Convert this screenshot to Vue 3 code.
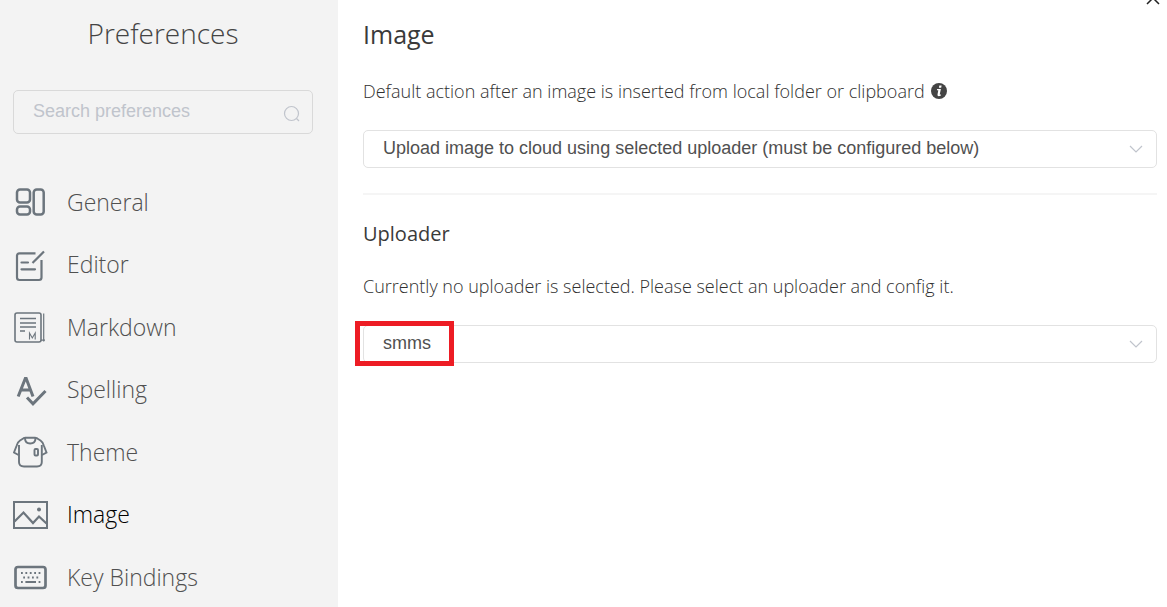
<script setup>
import { ref } from 'vue'

const categories = ['General', 'Editor', 'Markdown', 'Spelling', 'Theme', 'Image', 'Key Bindings']
const current = ref('Image')
const query = ref('')
const action = ref('upload')
const uploader = ref('smms')
</script>

<template>
  <div class="preferences">
    <aside class="sidebar">
      <h3 class="title">Preferences</h3>
      <div class="search">
        <input v-model="query" type="text" placeholder="Search preferences" aria-label="Search preferences" />
        <svg class="search-icon" viewBox="0 0 18 18" aria-hidden="true">
          <circle cx="8.5" cy="8.5" r="7" />
          <path d="M13.5 13.5 L16 16" />
        </svg>
      </div>
      <nav class="categories">
        <a
          v-for="name in categories"
          :key="name"
          href="#"
          class="category"
          :class="{ active: name === current }"
          @click.prevent="current = name"
        >
          <svg class="icon" viewBox="0 0 36 36" aria-hidden="true">
            <g v-if="name === 'General'" stroke-width="2.5">
              <rect x="4" y="5.5" width="13" height="13" rx="3" />
              <rect x="4" y="22.5" width="13" height="8" rx="3" />
              <rect x="20.7" y="5.5" width="10" height="25" rx="3" />
            </g>
            <g v-else-if="name === 'Editor'" stroke-width="2.2">
              <path d="M22.5 6.3 H6.5 Q4 6.3 4 8.8 V30.5 Q4 33 6.5 33 H26 Q28.5 33 28.5 30.5 V13" />
              <path d="M31 4.5 L19.5 16" />
              <path d="M8.5 15.5 H15 M8.5 22.3 H22" stroke-linecap="round" />
            </g>
            <g v-else-if="name === 'Markdown'">
              <rect x="2" y="4" width="26" height="29" rx="2" stroke-width="1.6" />
              <path d="M30.7 4.5 V32.5 M28 31.2 H32" stroke-width="1.2" />
              <path d="M7 9.5 H23 M7 14 H23 M7 18 H23 M7 22 H12" stroke-width="1.5" />
              <path d="M16.5 30.5 V24 L19.3 29 L22.2 24 V30.5" stroke-width="1.1" />
            </g>
            <g v-else-if="name === 'Spelling'" stroke-width="3">
              <path d="M5.2 24.5 L12.3 6.5 H13.2 L20 24.5 M7.5 18 H17.5" />
              <path d="M14 25.5 L20 31.8 L32.5 19" />
            </g>
            <g v-else-if="name === 'Theme'" stroke-width="1.9">
              <path d="M11 4 L7 6.5 Q4.5 8 3.5 12 L1 18.5 L5.5 21 M23.5 4 L27.5 6.5 Q30 8 31 12 L33.5 18.5 L29 21" />
              <path d="M6 11 V28 Q6 32.5 11 32.5 H24 Q28.8 32.5 28.8 28 V11" />
              <path d="M10.5 4.3 Q11.5 3.8 12.5 3.8 H22 Q23 3.8 24 4.3 M12 4 Q12 9.5 17.2 9.5 Q22.5 9.5 22.5 4" />
              <rect x="21.5" y="15" width="3.5" height="6.5" rx="1" />
            </g>
            <g v-else-if="name === 'Image'" stroke-width="2">
              <rect x="1" y="5" width="33" height="26" />
              <path d="M1.5 24.5 L10.5 15.5 L20 26 L26 19.5 L33.5 26.5" stroke-width="2.2" />
              <circle class="dot" cx="26" cy="12.5" r="2" />
            </g>
            <g v-else>
              <rect x="2.5" y="8" width="30" height="21" rx="2.5" stroke-width="2.7" />
              <path
                d="M8 14 H9.8 M12.4 14 H14.2 M16.8 14 H18.6 M21.2 14 H23 M25.6 14 H27.4 M10.2 18.5 H12 M14.6 18.5 H16.4 M19 18.5 H20.8 M23.4 18.5 H25.2 M8 23 H9.8 M12.4 23 H23 M25.6 23 H27.4"
                stroke-width="2.2"
              />
            </g>
          </svg>
          <span>{{ name }}</span>
        </a>
      </nav>
    </aside>

    <main class="content">
      <button class="close" type="button" aria-label="Close">
        <svg viewBox="0 0 14 14" aria-hidden="true"><path d="M1 1 L13 13 M13 1 L1 13" /></svg>
      </button>

      <h4 class="heading">Image</h4>
      <label class="description" for="image-action">
        <span>Default action after an image is inserted from local folder or clipboard</span>
        <svg class="info" viewBox="0 0 16 16" aria-hidden="true">
          <circle cx="8" cy="8" r="8" />
          <path d="M8.3 2.5 H10.6 L10.2 4.7 H7.9 Z M6.1 6.1 H9.9 L8.7 11.5 H9.9 L9.7 12.7 Q6.1 14 6.5 11.5 L7.3 7.3 H5.9 Z" />
        </svg>
      </label>
      <div class="select">
        <select id="image-action" v-model="action">
          <option value="upload">Upload image to cloud using selected uploader (must be configured below)</option>
        </select>
        <svg class="chevron" viewBox="0 0 14 8" aria-hidden="true"><path d="M1 1 L7 7 L13 1" /></svg>
      </div>

      <hr class="separator" />

      <h5 class="subheading">Uploader</h5>
      <label class="description" for="uploader">Currently no uploader is selected. Please select an uploader and config it.</label>
      <div class="select">
        <select id="uploader" v-model="uploader">
          <option value="smms">smms</option>
        </select>
        <svg class="chevron" viewBox="0 0 14 8" aria-hidden="true"><path d="M1 1 L7 7 L13 1" /></svg>
        <span class="highlight"></span>
      </div>
    </main>
  </div>
</template>

<style>
body {
  margin: 0;
  background: #fff;
}
</style>

<style scoped>
.preferences {
  display: flex;
  min-height: 100vh;
  font-family: "Open Sans", "Noto Sans", sans-serif;
  font-weight: 300;
  color: #303030;
}

.preferences * {
  box-sizing: border-box;
}

.sidebar {
  flex: 0 0 338px;
  display: flex;
  flex-direction: column;
  background: #f3f3f3;
}

.title {
  margin: 15px 25px 39px 13px;
  font-size: 28px;
  line-height: 36px;
  font-weight: 300;
  text-align: center;
  color: #444;
}

.search {
  position: relative;
  margin: 0 25px 38px 13px;
}

.search input {
  display: block;
  width: 100%;
  height: 44px;
  padding: 0 40px 2px 19px;
  border: 1px solid #d9d9d9;
  border-radius: 5px;
  outline: none;
  background: transparent;
  font: 18px "Liberation Sans", Arial, sans-serif;
  color: #555;
}

.search input::placeholder {
  color: #c0c4cc;
  opacity: 1;
}

.search-icon {
  position: absolute;
  top: 15px;
  right: 12px;
  width: 18px;
  height: 18px;
  fill: none;
  stroke: #c0c4cc;
  stroke-width: 1.2;
}

.categories {
  flex: 1;
  display: flex;
  flex-direction: column;
  justify-content: space-between;
}

.category {
  display: flex;
  align-items: center;
  gap: 18px;
  height: 60px;
  padding-left: 13px;
  font-size: 23px;
  line-height: 33px;
  color: #505050;
  text-decoration: none;
}

.category.active {
  color: #000;
}

.icon {
  width: 36px;
  height: 36px;
  fill: none;
  stroke: #6c757d;
}

.dot {
  fill: #6c757d;
  stroke: none;
}

.content {
  position: relative;
  flex: 1;
  min-width: 0;
  padding: 17px 10px 20px 25px;
  overflow: hidden;
}

.close {
  position: absolute;
  top: -9px;
  right: 7px;
  width: 14px;
  height: 14px;
  padding: 0;
  border: 0;
  background: none;
}

.close svg {
  display: block;
  fill: none;
  stroke: #222;
  stroke-width: 1.5;
}

.heading {
  margin: 0 0 27px;
  font-size: 25px;
  line-height: 34px;
  font-weight: 400;
  color: #3a3a3a;
}

.description {
  display: flex;
  align-items: center;
  gap: 6px;
  margin-bottom: 26px;
  font-size: 18px;
  line-height: 26px;
}

.info {
  width: 16px;
  height: 16px;
  fill: #444;
}

.info path {
  fill: #fff;
}

.select {
  position: relative;
}

.select select {
  display: block;
  width: 100%;
  height: 38px;
  padding: 0 40px 3px 19px;
  border: 1px solid #e2e2e2;
  border-radius: 5px;
  outline: none;
  appearance: none;
  background: #fff;
  font: 18px "Liberation Sans", Arial, sans-serif;
  color: #505050;
}

.chevron {
  position: absolute;
  top: 15px;
  right: 14px;
  width: 14px;
  height: 8px;
  fill: none;
  stroke: #c0c4cc;
  stroke-width: 1.2;
  pointer-events: none;
}

.separator {
  height: 2px;
  margin: 25px 0 26px;
  border: 0;
  background: #f5f5f5;
}

.subheading {
  margin: 0 0 26px;
  font-size: 20px;
  line-height: 26px;
  font-weight: 400;
  color: #3a3a3a;
}

.highlight {
  position: absolute;
  top: -4px;
  left: -8px;
  width: 99px;
  height: 45px;
  border: 5px solid #ed1c24;
  pointer-events: none;
}
</style>
